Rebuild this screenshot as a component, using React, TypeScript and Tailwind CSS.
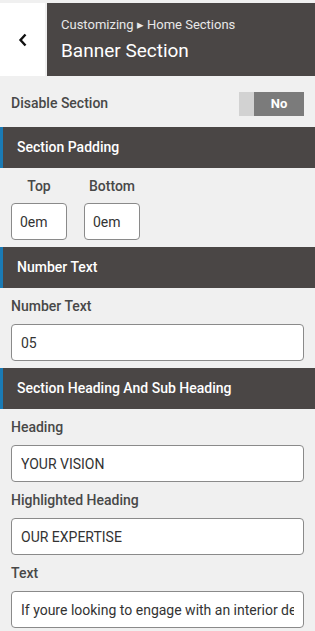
import React from 'react';

const SectionBar: React.FC<{ title: string }> = ({ title }) => (
  <div className="h-[41px] bg-[#4a4645] border-l-[3px] border-[#1a7bb5] flex items-center pl-[14px]">
    <span className="text-white text-[14px] font-medium">{title}</span>
  </div>
);

const Field: React.FC<{ label: string; value: string }> = ({ label, value }) => (
  <div className="px-[11px] pt-[8px]">
    <div className="h-[20px] flex items-center text-[14px] font-medium text-[#484848]">{label}</div>
    <input
      readOnly
      value={value}
      className="mt-[8px] block w-full h-[37px] bg-white border border-[#8a8a8a] rounded-[4px] px-[9px] text-[14px] text-[#333] outline-none"
    />
  </div>
);

export default function App() {
  return (
    <div className="w-[315px] h-[631px] bg-[#f0f0f0] overflow-hidden" style={{ fontFamily: 'Roboto, "Liberation Sans", sans-serif' }}>
      <div className="pt-[3px]">
        <div className="h-[73px] flex">
          <div className="w-[45px] bg-white flex items-center justify-center">
            <svg width="10" height="14" viewBox="0 0 10 14">
              <path d="M7.5 1.5 L2.5 7 L7.5 12.5" stroke="#111" strokeWidth="2.4" fill="none" />
            </svg>
          </div>
          <div className="w-[2px] bg-[#f0f0f0]" />
          <div className="flex-1 bg-[#4a4645] pl-[14px] flex flex-col justify-center">
            <div className="text-[13px] text-[#e8e8e8] leading-[16px]">Customizing ▸ Home Sections</div>
            <div className="text-[19px] text-white leading-[24px] mt-[6px]">Banner Section</div>
          </div>
        </div>
      </div>

      <div className="h-[51px] flex items-center justify-between px-[11px] pt-[4px]">
        <span className="text-[14px] font-medium text-[#484848]">Disable Section</span>
        <div className="flex h-[24px] w-[65px]">
          <div className="w-[15px] bg-[#d2d2d2]" />
          <div className="flex-1 bg-[#7b7b7b] flex items-center justify-center">
            <span className="text-white text-[13px] font-bold">No</span>
          </div>
        </div>
      </div>

      <SectionBar title="Section Padding" />
      <div className="flex gap-[17px] px-[11px] pt-[8px] pb-[7px]">
        {['Top', 'Bottom'].map((l) => (
          <div key={l} className="w-[56px]">
            <div className="h-[20px] flex items-center justify-center text-[14px] font-medium text-[#484848]">{l}</div>
            <input
              readOnly
              value="0em"
              className="mt-[7px] block w-full h-[37px] bg-white border border-[#8a8a8a] rounded-[4px] px-[8px] text-[14px] text-[#333] outline-none"
            />
          </div>
        ))}
      </div>

      <SectionBar title="Number Text" />
      <div className="pb-[7px]">
        <Field label="Number Text" value="05" />
      </div>

      <SectionBar title="Section Heading And Sub Heading" />
      <Field label="Heading" value="YOUR VISION" />
      <Field label="Highlighted Heading" value="OUR EXPERTISE" />
      <Field label="Text" value="If youre looking to engage with an interior designer for your project" />
    </div>
  );
}
